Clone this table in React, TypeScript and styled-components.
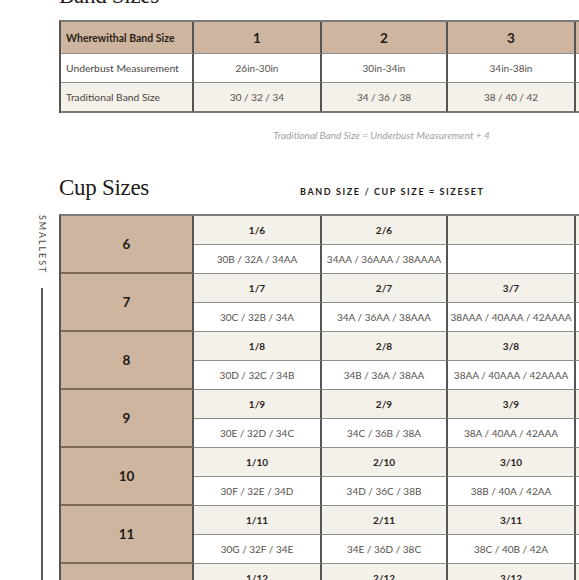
import React from "react";
import styled, { createGlobalStyle } from "styled-components";

const Global = createGlobalStyle`
  html, body { margin: 0; padding: 0; background: #ffffff; overflow: hidden; }
  body { width: 579px; height: 580px; font-family: "Lato", "Noto Sans", sans-serif; color: #2a241f; }
  #root { width: 579px; height: 580px; overflow: hidden; }
`;

const Page = styled.div`
  width: 760px;
  display: flex;
  flex-direction: column;
`;

const Section = styled.section`
  padding-left: 59px;
  display: flex;
  flex-direction: column;
`;

const Title = styled.h2`
  margin: 0;
  font-family: "Liberation Serif", "DejaVu Serif", serif;
  font-weight: 400;
  font-size: 23px;
  line-height: 23px;
  color: #1e1a17;
  letter-spacing: -0.3px;
`;

const BandTitle = styled(Title)`
  margin-top: -16px;
`;

const TableWrap = styled.div`
  width: 645px;
  margin-top: 13px;
  display: flex;
  flex-direction: column;
`;

const Grid = styled.div<{ $top: string }>`
  display: grid;
  grid-template-columns: 133px 128px 126px 128px 128px;
  border-top: 2px solid ${(p) => p.$top};
  border-left: 2px solid #555;
  width: max-content;
`;

type Tone = "tan" | "beige" | "white";
const bg: Record<Tone, string> = { tan: "#cdb59f", beige: "#f4f0ea", white: "#ffffff" };

const Cell = styled.div<{ $tone: Tone; $h: number; $left?: boolean; $bottom?: string; $span?: number }>`
  box-sizing: border-box;
  height: ${(p) => p.$h}px;
  background: ${(p) => bg[p.$tone]};
  border-right: 2px solid #555;
  border-bottom: ${(p) => p.$bottom ?? "1px solid #8e8e8e"};
  display: flex;
  align-items: center;
  justify-content: ${(p) => (p.$left ? "flex-start" : "center")};
  padding: 0 ${(p) => (p.$left ? "5px" : "0")};
  ${(p) => (p.$span ? `grid-row: span ${p.$span};` : "")}
  white-space: nowrap;
  overflow: hidden;
`;

const HeadText = styled.span`
  font-weight: 700;
  font-size: 10.5px;
  color: #2a1f16;
`;

const BigNum = styled.span`
  font-weight: 700;
  font-size: 13.5px;
  color: #1f1914;
`;

const Label = styled.span`
  font-weight: 400;
  font-size: 10.3px;
  color: #4a4542;
`;

const SubLabel = styled.span`
  font-weight: 700;
  font-size: 10px;
  color: #2a2420;
`;

const Value = styled.span`
  font-weight: 400;
  font-size: 10px;
  color: #56514d;
`;

const Footnote = styled.p`
  margin: 16px 0 0;
  text-align: center;
  font-style: italic;
  font-size: 10px;
  line-height: 12px;
  color: #a3a09d;
`;

const CupHead = styled.div`
  margin-top: 35px;
  padding-left: 59px;
  display: flex;
  align-items: baseline;
`;

const Formula = styled.span`
  margin-left: 151px;
  font-weight: 700;
  font-size: 9px;
  letter-spacing: 1.6px;
  color: #1e1a17;
`;

const CupBody = styled.div`
  margin-top: 15px;
  display: flex;
  align-items: stretch;
`;

const Side = styled.div`
  width: 12px;
  margin-left: 36px;
  margin-right: 11px;
  display: flex;
  flex-direction: column;
  align-items: center;
`;

const SideLabel = styled.span`
  writing-mode: vertical-rl;
  font-size: 9px;
  letter-spacing: 1.9px;
  color: #4a4542;
  margin-top: 1px;
`;

const SideLine = styled.div`
  width: 2px;
  flex: 1;
  margin-top: 14px;
  background: #5a5a5a;
`;

const bandCols = [
  { n: "1", u: "26in-30in", t: "30 / 32 / 34" },
  { n: "2", u: "30in-34in", t: "34 / 36 / 38" },
  { n: "3", u: "34in-38in", t: "38 / 40 / 42" },
  { n: "4", u: "38in-42in", t: "42 / 44 / 46" },
];

type Pair = [string, string] | null;
const cupRows: { cup: string; cells: Pair[] }[] = [
  { cup: "6", cells: [["1/6", "30B / 32A / 34AA"], ["2/6", "34AA / 36AAA / 38AAAA"], null, null] },
  { cup: "7", cells: [["1/7", "30C / 32B / 34A"], ["2/7", "34A / 36AA / 38AAA"], ["3/7", "38AAA / 40AAA / 42AAAA"], null] },
  { cup: "8", cells: [["1/8", "30D / 32C / 34B"], ["2/8", "34B / 36A / 38AA"], ["3/8", "38AA / 40AAA / 42AAAA"], ["4/8", "42AAA / 44AAAA"]] },
  { cup: "9", cells: [["1/9", "30E / 32D / 34C"], ["2/9", "34C / 36B / 38A"], ["3/9", "38A / 40AA / 42AAA"], ["4/9", "42AA / 44AAA"]] },
  { cup: "10", cells: [["1/10", "30F / 32E / 34D"], ["2/10", "34D / 36C / 38B"], ["3/10", "38B / 40A / 42AA"], ["4/10", "42A / 44AA"]] },
  { cup: "11", cells: [["1/11", "30G / 32F / 34E"], ["2/11", "34E / 36D / 38C"], ["3/11", "38C / 40B / 42A"], ["4/11", "42AA / 44A"]] },
  { cup: "12", cells: [["1/12", "30H / 32G / 34F"], ["2/12", "34F / 36E / 38D"], ["3/12", "38D / 40C / 42B"], ["4/12", "42B / 44A"]] },
];

export default function App() {
  return (
    <>
      <Global />
      <Page>
        <Section>
          <BandTitle>Band Sizes</BandTitle>
          <TableWrap>
            <Grid $top="#7a7a7a">
              <Cell $tone="tan" $h={32} $left>
                <HeadText>Wherewithal Band Size</HeadText>
              </Cell>
              {bandCols.map((c) => (
                <Cell key={c.n} $tone="tan" $h={32}>
                  <BigNum>{c.n}</BigNum>
                </Cell>
              ))}
              <Cell $tone="white" $h={29} $left>
                <Label>Underbust Measurement</Label>
              </Cell>
              {bandCols.map((c) => (
                <Cell key={c.n} $tone="white" $h={29}>
                  <Value>{c.u}</Value>
                </Cell>
              ))}
              <Cell $tone="beige" $h={30} $left $bottom="2px solid #7a7a7a">
                <Label>Traditional Band Size</Label>
              </Cell>
              {bandCols.map((c) => (
                <Cell key={c.n} $tone="beige" $h={30} $bottom="2px solid #7a7a7a">
                  <Value>{c.t}</Value>
                </Cell>
              ))}
            </Grid>
            <Footnote>Traditional Band Size = Underbust Measurement + 4</Footnote>
          </TableWrap>
        </Section>

        <CupHead>
          <Title>Cup Sizes</Title>
          <Formula>BAND SIZE / CUP SIZE = SIZESET</Formula>
        </CupHead>

        <CupBody>
          <Side>
            <SideLabel>SMALLEST</SideLabel>
            <SideLine />
          </Side>
          <Grid $top="#7a7a7a">
            {cupRows.map((r) => (
              <React.Fragment key={r.cup}>
                <Cell $tone="tan" $h={58} $span={2} $bottom="2px solid #7d6a5a">
                  <BigNum>{r.cup}</BigNum>
                </Cell>
                {r.cells.map((c, i) => (
                  <Cell key={"l" + i} $tone="beige" $h={29}>
                    <SubLabel>{c ? c[0] : ""}</SubLabel>
                  </Cell>
                ))}
                {r.cells.map((c, i) => (
                  <Cell key={"v" + i} $tone="white" $h={29}>
                    <Value>{c ? c[1] : ""}</Value>
                  </Cell>
                ))}
              </React.Fragment>
            ))}
          </Grid>
        </CupBody>
      </Page>
    </>
  );
}
